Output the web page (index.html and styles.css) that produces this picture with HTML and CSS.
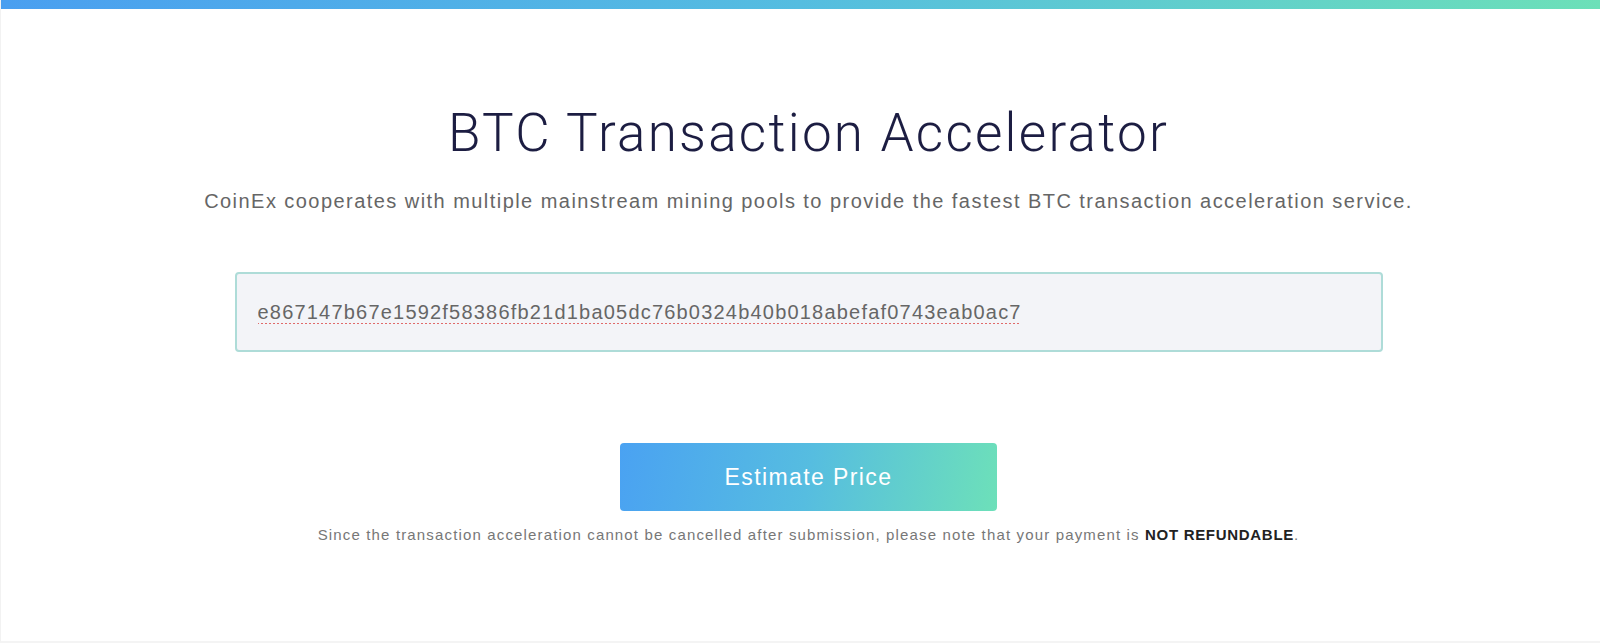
FILE: index.html
```html
<!DOCTYPE html>
<html lang="en">
<head>
  <meta charset="UTF-8" />
  <meta name="viewport" content="width=device-width, initial-scale=1.0">
  <title>BTC Transaction Accelerator</title>
  <link rel="stylesheet" href="styles.css">
</head>
<body>
  <!-- gradient strip along the top -->
  <div class="top-bar"></div>

  <main class="accelerator">
    <h1 class="title">BTC Transaction Accelerator</h1>
    <p class="subtitle">CoinEx cooperates with multiple mainstream mining pools to provide the fastest BTC transaction acceleration service.</p>

    <div class="txid-box">
      <input type="text" class="txid-input" value="e867147b67e1592f58386fb21d1ba05dc76b0324b40b018abefaf0743eab0ac7" placeholder="Please enter TXID">
    </div>

    <button class="estimate-btn">Estimate Price</button>
    <p class="notice">Since the transaction acceleration cannot be cancelled after submission, please note that your payment is <strong>NOT REFUNDABLE</strong>.</p>
  </main>
</body>
</html>
```

FILE: styles.css
```css
html, body {
  margin: 0;
  padding: 0;
  background-color: #fff;
  font-family: "Liberation Sans", Arial, sans-serif;
  overflow: hidden;
}

body {
  height: 641px;
  border-left: 1px solid #f2f2f2;
  border-bottom: 2px solid #f4f4f4;
}

.top-bar {
  height: 9px;
  background: linear-gradient(90deg, #4a9ff0, #55bde0 50%, #6ce0b8);
}

.accelerator {
  padding-left: 16px;
  text-align: center;
}

.title {
  margin: 92px 0 0;
  font-family: Roboto, "Liberation Sans", Arial, sans-serif;
  font-size: 53px;
  line-height: 64px;
  font-weight: 300;
  letter-spacing: 2.25px;
  color: #1c1d42;
}

.subtitle {
  margin: 24px 0 0;
  font-size: 20px;
  line-height: 24px;
  letter-spacing: 1.45px;
  color: #666;
}

.txid-box {
  display: flex;
  justify-content: center;
  margin-top: 59px;
}

.txid-input {
  box-sizing: border-box;
  width: 1148px;
  height: 80px;
  padding: 0 21px;
  background: #f3f4f8;
  border: 2px solid #aedcd8;
  border-radius: 4px;
  font-family: "Liberation Sans", Arial, sans-serif;
  font-size: 20px;
  letter-spacing: 1.2px;
  color: #666;
  outline: none;
  text-decoration: underline dotted #e06a6a;
  text-underline-offset: 5px;
}

.estimate-btn {
  display: block;
  width: 377px;
  height: 68px;
  margin: 91px auto 0;
  border: none;
  border-radius: 4px;
  background: linear-gradient(100deg, #4aa2f2, #56bde0 50%, #6de0b9);
  color: #fff;
  font-family: "Liberation Sans", Arial, sans-serif;
  font-size: 23px;
  letter-spacing: 1.4px;
  cursor: pointer;
}

.notice {
  margin: 14px 0 0;
  font-size: 15px;
  line-height: 20px;
  letter-spacing: 1.15px;
  color: #777;
}

.notice strong {
  color: #222;
  letter-spacing: 0.7px;
}
```
